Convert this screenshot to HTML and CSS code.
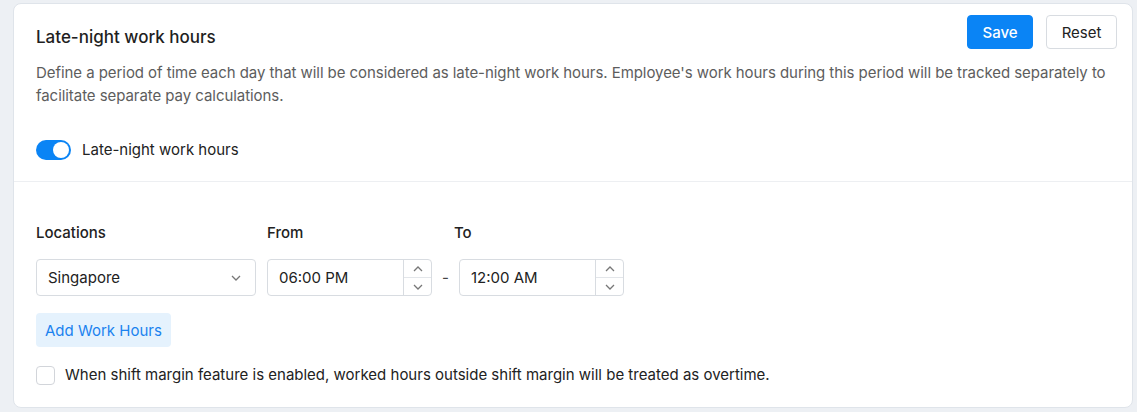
FILE: index.html
```html
<!DOCTYPE html>
<html lang="en">
<head>
  <meta charset="UTF-8" />
  <title>Late-night work hours</title>
  <link rel="stylesheet" href="styles.css">
</head>
<body>

  <div class="card">
    <div class="card-top">
      <div class="head">
        <h2>Late-night work hours</h2>
        <div class="actions">
          <button class="btn btn-primary">Save</button>
          <button class="btn btn-light">Reset</button>
        </div>
      </div>
      <p class="desc">Define a period of time each day that will be considered as late-night work hours. Employee's work hours during this period will be tracked separately to facilitate separate pay calculations.</p>

      <label class="switch-row">
        <span class="switch"><span class="knob"></span></span>
        <span>Late-night work hours</span>
      </label>
    </div>

    <div class="card-body">
      <div class="labels">
        <span class="lbl lbl-loc">Locations</span>
        <span class="lbl lbl-from">From</span>
        <span class="lbl lbl-to">To</span>
      </div>

      <div class="fields">
        <div class="select">
          <span>Singapore</span>
          <svg width="12" height="8" viewBox="0 0 12 8"><path d="M2 2l4 4 4-4" fill="none" stroke="#777" stroke-width="1.3"/></svg>
        </div>

        <div class="time">
          <span class="time-val">06:00 PM</span>
          <div class="spin">
            <span><svg width="12" height="8" viewBox="0 0 12 8"><path d="M2 6l4-4 4 4" fill="none" stroke="#777" stroke-width="1.3"/></svg></span>
            <span><svg width="12" height="8" viewBox="0 0 12 8"><path d="M2 2l4 4 4-4" fill="none" stroke="#777" stroke-width="1.3"/></svg></span>
          </div>
        </div>

        <span class="dash">-</span>

        <div class="time">
          <span class="time-val">12:00 AM</span>
          <div class="spin">
            <span><svg width="12" height="8" viewBox="0 0 12 8"><path d="M2 6l4-4 4 4" fill="none" stroke="#777" stroke-width="1.3"/></svg></span>
            <span><svg width="12" height="8" viewBox="0 0 12 8"><path d="M2 2l4 4 4-4" fill="none" stroke="#777" stroke-width="1.3"/></svg></span>
          </div>
        </div>
      </div>

      <button class="btn-add">Add Work Hours</button>

      <label class="check-row">
        <span class="checkbox"></span>
        <span>When shift margin feature is enabled, worked hours outside shift margin will be treated as overtime.</span>
      </label>
    </div>
  </div>

</body>
</html>
```

FILE: styles.css
```css
* { margin: 0; padding: 0; box-sizing: border-box; }

body {
  font-family: 'Inter', 'Noto Sans', sans-serif;
  background-color: #edf0f4;
  color: #222;
  padding: 3px 4px 4px 13px;
  font-size: 15px;
}

.card {
  background: #fff;
  border: 1px solid #dfe4ea;
  border-radius: 8px;
  height: 405px;
}

.card-top {
  padding: 11px 15px 21px 22px;
  border-bottom: 1px solid #edeff2;
}

.head {
  display: flex;
  justify-content: space-between;
  align-items: flex-start;
}

.head h2 {
  font-size: 17px;
  font-weight: 500;
  line-height: 24px;
  margin-top: 10px;
  color: #1f1f1f;
}

.actions {
  display: flex;
  gap: 13px;
}

.btn {
  height: 34px;
  border-radius: 4px;
  font-family: inherit;
  font-size: 15px;
  padding: 0 14px;
  cursor: pointer;
}

.btn-primary {
  background: #0a84f5;
  border: 1px solid #0a84f5;
  color: #fff;
  font-weight: 500;
  width: 66px;
}

.btn-light {
  background: #fff;
  border: 1px solid #d8dce1;
  color: #222;
  width: 71px;
}

.desc {
  margin-top: 12px;
  line-height: 23px;
  color: #5d5d5d;
  font-size: 15px;
  letter-spacing: -0.06px;
}

.switch-row {
  display: flex;
  align-items: center;
  gap: 11px;
  margin-top: 33px;
  line-height: 20px;
}

.switch {
  width: 35px;
  height: 20px;
  border-radius: 10px;
  background: #0a84f5;
  display: flex;
  align-items: center;
  justify-content: flex-end;
  padding-right: 2px;
}

.knob {
  width: 16px;
  height: 16px;
  border-radius: 50%;
  background: #fff;
}

.card-body {
  padding: 41px 22px 0 22px;
}

.labels {
  display: flex;
  line-height: 20px;
  font-weight: 500;
}

.lbl-loc { width: 231px; }
.lbl-from { width: 187px; }

.fields {
  display: flex;
  align-items: center;
  margin-top: 16px;
}

.select {
  width: 220px;
  height: 37px;
  border: 1px solid #d8dce1;
  border-radius: 4px;
  display: flex;
  align-items: center;
  justify-content: space-between;
  padding: 0 13px 0 11px;
  margin-right: 11px;
}

.time {
  width: 165px;
  height: 37px;
  border: 1px solid #d8dce1;
  border-radius: 4px;
  display: flex;
}

.time-val {
  flex: 1;
  display: flex;
  align-items: center;
  padding-left: 11px;
}

.spin {
  width: 28px;
  border-left: 1px solid #d8dce1;
  display: flex;
  flex-direction: column;
}

.spin span {
  flex: 1;
  display: flex;
  align-items: center;
  justify-content: center;
}

.spin span + span {
  border-top: 1px solid #e3e6ea;
}

.dash {
  width: 27px;
  text-align: center;
  color: #444;
}

.btn-add {
  display: block;
  margin-top: 17px;
  height: 34px;
  padding: 0 9px;
  border: none;
  border-radius: 4px;
  background: #e5f2fd;
  color: #1b82ef;
  font-family: inherit;
  font-size: 15px;
  cursor: pointer;
}

.check-row {
  display: flex;
  align-items: center;
  gap: 10px;
  margin-top: 18px;
  line-height: 20px;
}

.checkbox {
  width: 19px;
  height: 19px;
  border: 1px solid #d2d5da;
  border-radius: 4px;
}
```
